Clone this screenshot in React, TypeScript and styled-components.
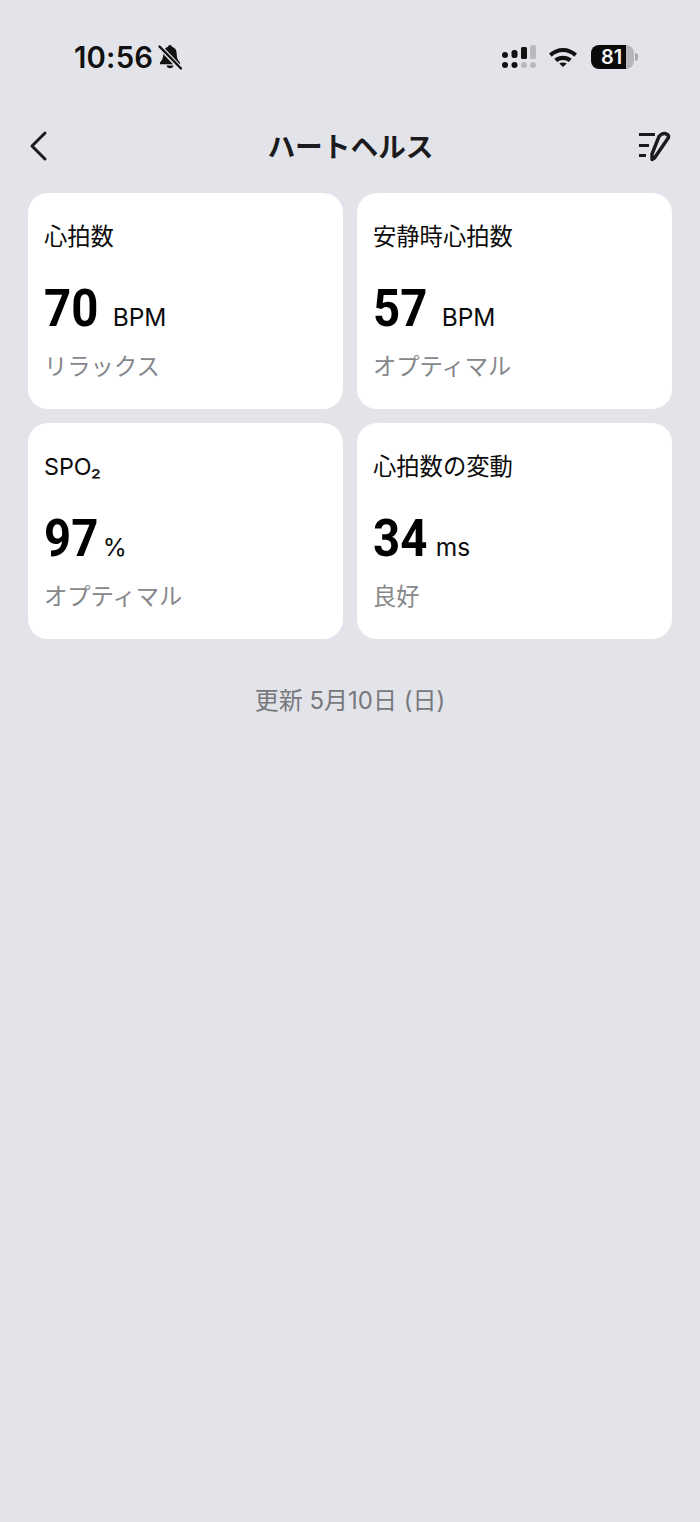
import React from 'react';
import styled, { createGlobalStyle } from 'styled-components';

const CJK = `"Inter", "Noto Sans CJK JP", sans-serif`;

const metrics = [
  { title: '心拍数', value: '70', unit: 'BPM', gap: 14, status: 'リラックス' },
  { title: '安静時心拍数', value: '57', unit: 'BPM', gap: 14, status: 'オプティマル' },
  { title: 'SPO₂', value: '97', unit: '%', gap: 4, status: 'オプティマル' },
  { title: '心拍数の変動', value: '34', unit: 'ms', gap: 8, status: '良好' },
];

const App = () => {
  return (
    <Page>
      <GlobalStyle />
      <StatusBar>
        <TimeGroup>
          <Time>10:56</Time>
          <svg width="24" height="26" viewBox="0 0 24 26">
            <path d="M12 1c-1.100 0-1.900.8-2 1.800C6.800 3.800 5.300 6.300 5.300 9.500c0 4-.8 6.500-3.300 9v1.700h20v-1.700c-2.500-2.500-3.300-5-3.300-9 0-3.200-1.500-5.700-4.700-6.700C13.900 1.800 13.100 1 12 1z" fill="#111" />
            <path d="M8.500 21.500a3.600 3.600 0 0 0 7 0z" fill="#111" />
            <path d="M1 2l22 23" stroke="#e3e4ea" strokeWidth="5" />
            <path d="M1.500 2.500l21.500 22" stroke="#111" strokeWidth="2.400" strokeLinecap="round" />
          </svg>
        </TimeGroup>
        <StatusIcons>
          <svg width="34" height="24" viewBox="0 0 34 24">
            <circle cx="3" cy="10" r="3" fill="#111" />
            <circle cx="3" cy="20" r="3" fill="#111" />
            <rect x="9.500" y="5" width="6" height="8" rx="2.500" fill="#111" />
            <circle cx="12.500" cy="20" r="3" fill="#111" />
            <rect x="19" y="2" width="6" height="12" rx="1.500" fill="#111" />
            <circle cx="22" cy="20" r="3" fill="#b9babd" />
            <rect x="28" y="0" width="6" height="14" rx="1.500" fill="#b9babd" />
            <circle cx="31" cy="20" r="3" fill="#b9babd" />
          </svg>
          <svg width="28" height="20" viewBox="0 0 28 20">
            <path d="M0 6.500C8-1 20-1 28 6.500l-2.700 3.200C18.500 3.500 9.500 3.500 2.700 9.700z" fill="#111" />
            <path d="M5.300 11.800C10.300 7.800 17.700 7.800 22.700 11.800l-2.800 3.100c-3.500-2.700-8.300-2.700-11.800 0z" fill="#111" />
            <path d="M10.300 16.500c2.100-1.500 5.300-1.500 7.400 0L14 20z" fill="#111" />
          </svg>
          <Battery>
            <BatteryBody>
              <BatteryLevel>81</BatteryLevel>
            </BatteryBody>
            <BatteryTip />
          </Battery>
        </StatusIcons>
      </StatusBar>
      <Header>
        <IconSlot>
          <svg width="20" height="32" viewBox="0 0 20 32">
            <path d="M16 3L3 16l13 13" fill="none" stroke="#1b1b1d" strokeWidth="3" strokeLinecap="round" strokeLinejoin="round" />
          </svg>
        </IconSlot>
        <Title>ハートヘルス</Title>
        <IconSlot $right>
          <svg width="34" height="32" viewBox="0 0 34 32">
            <path d="M1 4.500h16M1 15.500h10M1 25.500h7" stroke="#1b1b1d" strokeWidth="3.200" fill="none" />
            <path d="M21 6.500Q24 3 27 3.500Q31 4.500 30.500 7.500L16.500 28L14 29.500L14 24Z" fill="none" stroke="#1b1b1d" strokeWidth="3.400" strokeLinejoin="round" />
          </svg>
        </IconSlot>
      </Header>
      <Grid>
        {metrics.map((m) => (
          <Card key={m.title}>
            <CardTitle>{m.title}</CardTitle>
            <ValueRow $gap={m.gap}>
              <Value>{m.value}</Value>
              <Unit>{m.unit}</Unit>
            </ValueRow>
            <Status>{m.status}</Status>
          </Card>
        ))}
      </Grid>
      <Updated>更新 5月10日 (日)</Updated>
    </Page>
  );
};

export default App;

const GlobalStyle = createGlobalStyle`
  html, body {
    margin: 0;
    padding: 0;
    background: #e3e4ea;
  }
`;

const Page = styled.div`
  width: 700px;
  height: 1522px;
  background: #e3e4ea;
  font-family: ${CJK};
  overflow: hidden;
`;

const StatusBar = styled.div`
  display: flex;
  justify-content: space-between;
  align-items: center;
  height: 32px;
  margin-top: 41px;
  padding: 0 62px 0 74px;
`;

const TimeGroup = styled.div`
  display: flex;
  align-items: center;
  gap: 5px;
`;

const Time = styled.div`
  font-size: 29.3px;
  font-weight: 600;
  letter-spacing: 0.2px;
  color: #111;
`;

const StatusIcons = styled.div`
  display: flex;
  align-items: center;
  gap: 13px;
`;

const Battery = styled.div`
  display: flex;
  align-items: center;
  gap: 1px;
  margin-left: 1px;
`;

const BatteryBody = styled.div`
  width: 43px;
  height: 24px;
  border-radius: 8px;
  background: linear-gradient(90deg, #0b0b0b 81%, #b5b6b9 81%);
  display: flex;
  align-items: center;
  padding-left: 10px;
  box-sizing: border-box;
`;

const BatteryLevel = styled.span`
  font-size: 20px;
  font-weight: 600;
  color: #f4f4f4;
`;

const BatteryTip = styled.div`
  width: 3px;
  height: 8px;
  border-radius: 0 3px 3px 0;
  background: #a9aaad;
`;

const Header = styled.div`
  display: flex;
  justify-content: space-between;
  align-items: center;
  height: 48px;
  margin-top: 49px;
  padding: 0 28px 0 29px;
`;

const IconSlot = styled.div<{ $right?: boolean }>`
  width: 40px;
  display: flex;
  justify-content: ${(p) => (p.$right ? 'flex-end' : 'flex-start')};
`;

const Title = styled.div`
  font-size: 27.7px;
  font-weight: 700;
  color: #1b1b1d;
  margin-top: -2px;
`;

const Grid = styled.div`
  display: grid;
  grid-template-columns: 315px 315px;
  gap: 14px;
  margin-top: 23px;
  padding: 0 28px;
`;

const Card = styled.div`
  height: 216px;
  box-sizing: border-box;
  padding: 27px 16px 0;
  background: #fff;
  border-radius: 20px;
`;

const CardTitle = styled.div`
  font-size: 23.3px;
  line-height: 34px;
  color: #0c0c0c;
`;

const ValueRow = styled.div<{ $gap: number }>`
  display: flex;
  align-items: baseline;
  gap: ${(p) => p.$gap}px;
  margin-top: 25px;
  height: 60px;
`;

const Value = styled.span`
  font-family: Roboto, sans-serif;
  font-size: 52px;
  line-height: 60px;
  font-weight: 700;
  color: #000;
  display: inline-block;
  transform: scaleX(0.91);
  transform-origin: left center;
  margin-right: -5px;
`;

const Unit = styled.span`
  font-size: 24.5px;
  color: #0c0c0c;
`;

const Status = styled.div`
  font-size: 23.3px;
  line-height: 34px;
  margin-top: 11px;
  color: #86878a;
`;

const Updated = styled.div`
  margin-top: 45px;
  text-align: center;
  font-size: 24px;
  line-height: 34px;
  color: #77787c;
`;
